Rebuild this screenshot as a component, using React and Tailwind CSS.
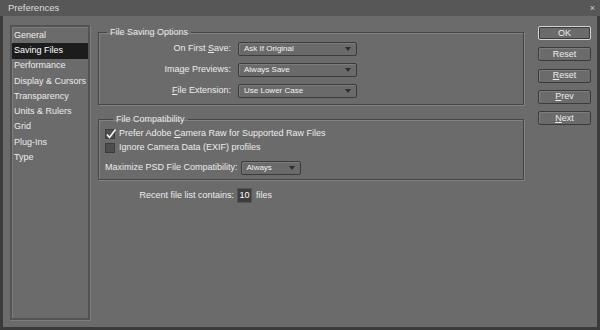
import React from 'react';

const font = { fontFamily: '"Liberation Sans", Arial, sans-serif' };

const sidebarItems = [
  'General',
  'Saving Files',
  'Performance',
  'Display & Cursors',
  'Transparency',
  'Units & Rulers',
  'Grid',
  'Plug-Ins',
  'Type',
];

// label with one underlined access key
const Key = ({ pre, k, post }) => (
  <span className="whitespace-pre">
    {pre}
    <span className="underline underline-offset-1">{k}</span>
    {post}
  </span>
);

const Select = ({ value, width }) => (
  <div
    className={`flex items-center justify-between h-[14px] ${width} pl-[5px] pr-[5px] bg-[#6a6a6a] border border-[#3b3b3b] rounded-[2px] shadow-[inset_1px_1px_0_#7c7c7c]`}
  >
    <span className="text-[8px] leading-none text-[#f2f2f2]">{value}</span>
    <svg width="6" height="4" viewBox="0 0 6 4">
      <path d="M0 0 H6 L3 4 Z" fill="#2e2e2e" />
    </svg>
  </div>
);

const Checkbox = ({ checked }) => (
  <div className="relative w-[10px] h-[10px] bg-[#4e4e4e] border border-[#3c3c3c]">
    {checked && (
      <svg className="absolute -left-[1px] -top-[2px]" width="12" height="12" viewBox="0 0 12 12">
        <path d="M2 6.5 L4.5 9.5 L10.5 1.5" fill="none" stroke="#f4f4f4" strokeWidth="1.6" />
      </svg>
    )}
  </div>
);

const Button = ({ children, primary }) => (
  <div
    className={`flex items-center justify-center h-[14px] w-[53px] bg-[#6b6b6b] rounded-[2px] text-[9px] leading-none text-[#ececec] ${
      primary
        ? 'border border-[#d4d4d4] shadow-[inset_0_0_0_1px_#3a3a3a]'
        : 'border border-[#3b3b3b] shadow-[inset_1px_1px_0_#7e7e7e]'
    }`}
  >
    {children}
  </div>
);

const Group = ({ title, children, className }) => (
  <fieldset
    className={`border border-[#464646] shadow-[1px_1px_0_#828282,inset_1px_1px_0_#828282] ${className}`}
  >
    <legend className="ml-[8px] px-[3px] text-[9px] leading-[11px] text-[#ececec]">{title}</legend>
    {children}
  </fieldset>
);

export default function App() {
  return (
    <div className="w-[600px] h-[330px] bg-[#3a3a3a] flex flex-col overflow-hidden" style={font}>
      {/* Title bar */}
      <div className="h-[16px] flex items-center justify-between pl-[8px] pr-[5px] bg-[#575757]">
        <span className="text-[9.5px] text-[#dedede]">Preferences</span>
        <span className="text-[9px] leading-none text-[#cfcfcf]">×</span>
      </div>

      {/* Dialog body */}
      <div className="flex-1 mx-[3px] mb-[3px] bg-[#6b6b6b] flex pl-[7px] text-[#ececec]">
        {/* Sidebar */}
        <div className="mt-[9px] w-[80px] h-[295px] border-2 border-[#535353] shadow-[1px_1px_0_#7e7e7e,inset_1px_1px_0_#7e7e7e] pt-[1px]">
          {sidebarItems.map((item) => (
            <div
              key={item}
              className={`h-[15.25px] flex items-center pl-[2px] text-[9px] ${
                item === 'Saving Files' ? 'bg-[#1c1c1c] text-white' : 'text-[#ececec]'
              }`}
            >
              {item}
            </div>
          ))}
        </div>

        {/* Main options */}
        <div className="ml-[8px] mt-[11px] w-[426px] flex flex-col">
          <Group title="File Saving Options" className="pt-[4px] pb-[6px]">
            <div className="grid grid-cols-[132px_119px] gap-x-[7px] gap-y-[7px] text-[9px]">
              <div className="h-[14px] flex items-center justify-end">
                <Key pre="On First " k="S" post="ave:" />
              </div>
              <Select value="Ask If Original" width="w-[119px]" />
              <div className="h-[14px] flex items-center justify-end">
                <Key pre="Ima" k="g" post="e Previews:" />
              </div>
              <Select value="Always Save" width="w-[119px]" />
              <div className="h-[14px] flex items-center justify-end">
                <Key pre="" k="F" post="ile Extension:" />
              </div>
              <Select value="Use Lower Case" width="w-[119px]" />
            </div>
          </Group>

          <Group title="File Compatibility" className="mt-[9px] pt-[2px] pb-[4px] pl-[6px]">
            <div className="flex flex-col text-[9px]">
              <div className="h-[14px] flex items-center gap-[4px]">
                <Checkbox checked />
                <Key pre="Prefer Adobe " k="C" post="amera Raw for Supported Raw Files" />
              </div>
              <div className="h-[14px] flex items-center gap-[4px]">
                <Checkbox />
                <span>Ignore Camera Data (EXIF) profiles</span>
              </div>
              <div className="mt-[6px] h-[14px] flex items-center gap-[3px]">
                <span>Maximize PSD File Compatibility:</span>
                <Select value="Always" width="w-[60px]" />
              </div>
            </div>
          </Group>

          <div className="mt-[8px] h-[15px] flex items-center text-[9px]">
            <span className="w-[136px] text-right">Recent file list contains:</span>
            <div className="ml-[3px] w-[15px] h-[15px] flex items-center justify-center bg-[#3d3d3d] border border-[#555] text-[9px] text-white">
              10
            </div>
            <span className="ml-[4px]">files</span>
          </div>
        </div>

        {/* Buttons */}
        <div className="ml-[14px] mt-[10px] flex flex-col gap-[7.3px]">
          <Button primary>OK</Button>
          <Button>Reset</Button>
          <Button>
            <Key pre="" k="R" post="eset" />
          </Button>
          <Button>
            <Key pre="" k="P" post="rev" />
          </Button>
          <Button>
            <Key pre="" k="N" post="ext" />
          </Button>
        </div>
      </div>
    </div>
  );
}
